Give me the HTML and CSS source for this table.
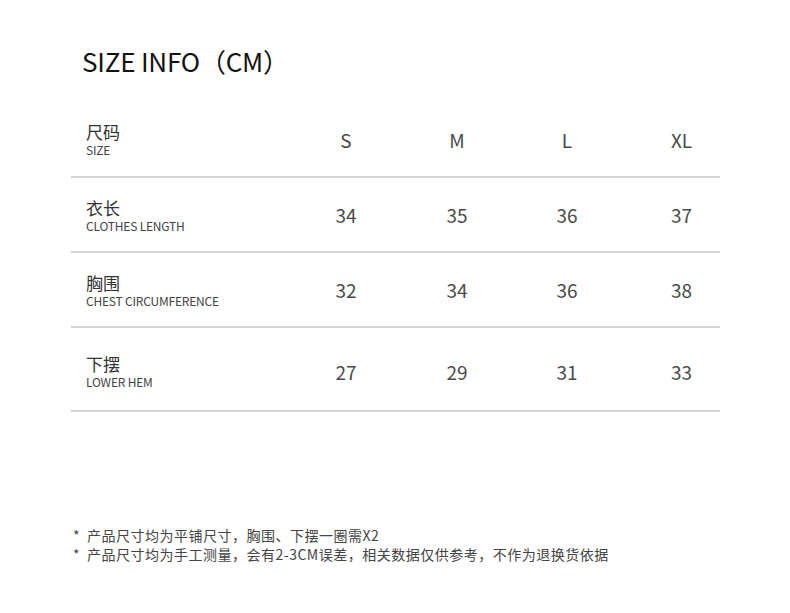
FILE: index.html
```html
<!DOCTYPE html>
<html lang="zh-CN">
<head>
<meta charset="utf-8">
<title>SIZE INFO</title>
<link rel="stylesheet" href="styles.css">
</head>
<body>
<div class="page">
  <h1 class="title">SIZE INFO（CM）</h1>
  <div class="table">
    <div class="row head">
      <div class="label"><div class="zh">尺码</div><div class="en">SIZE</div></div>
      <div class="cell">S</div>
      <div class="cell">M</div>
      <div class="cell">L</div>
      <div class="cell last">XL</div>
    </div>
    <div class="row">
      <div class="label"><div class="zh">衣长</div><div class="en">CLOTHES LENGTH</div></div>
      <div class="cell">34</div>
      <div class="cell">35</div>
      <div class="cell">36</div>
      <div class="cell last">37</div>
    </div>
    <div class="row">
      <div class="label"><div class="zh">胸围</div><div class="en">CHEST CIRCUMFERENCE</div></div>
      <div class="cell">32</div>
      <div class="cell">34</div>
      <div class="cell">36</div>
      <div class="cell last">38</div>
    </div>
    <div class="row tall">
      <div class="label"><div class="zh">下摆</div><div class="en">LOWER HEM</div></div>
      <div class="cell">27</div>
      <div class="cell">29</div>
      <div class="cell">31</div>
      <div class="cell last">33</div>
    </div>
  </div>
  <div class="notes">
    <p class="note"><span class="star">*</span>产品尺寸均为平铺尺寸，胸围、下摆一圈需X2</p>
    <p class="note"><span class="star">*</span>产品尺寸均为手工测量，会有2-3CM误差，相关数据仅供参考，不作为退换货依据</p>
  </div>
</div>
</body>
</html>
```

FILE: styles.css
```css
html, body {
  margin: 0;
  padding: 0;
  background: #ffffff;
}
body {
  font-family: "Noto Sans CJK SC", "Noto Sans", sans-serif;
  color: #333333;
}
.page {
  width: 790px;
  height: 613px;
  padding-top: 46px;
  box-sizing: border-box;
}
.title {
  margin: 0 0 0 82px;
  font-size: 26px;
  line-height: 30px;
  font-weight: 400;
  color: #111111;
  letter-spacing: -0.2px;
}
.table {
  margin: 34px 0 0 71px;
  width: 649px;
}
.row {
  display: grid;
  grid-template-columns: 220px 110px 112px 108px 1fr;
  align-items: center;
  box-sizing: border-box;
  height: 75px;
  border-bottom: 2px solid #d4d4d4;
}
.row.head {
  height: 68px;
  padding-bottom: 8px;
}
.row.tall {
  height: 84px;
  padding-top: 4px;
}
.label {
  padding-left: 15px;
}
.zh {
  font-size: 17px;
  line-height: 21px;
  color: #333333;
}
.en {
  font-size: 12px;
  line-height: 14px;
  color: #444444;
  letter-spacing: -0.2px;
  margin-top: 1px;
}
.cell {
  text-align: center;
  font-size: 19px;
  color: #4a4a4a;
}
.cell.last {
  padding-left: 22px;
}
.notes {
  margin: 114px 0 0 73px;
}
.note {
  margin: 0;
  font-size: 14px;
  line-height: 19px;
  color: #444444;
  letter-spacing: 0.5px;
}
.star {
  display: inline-block;
  width: 14px;
}
```
